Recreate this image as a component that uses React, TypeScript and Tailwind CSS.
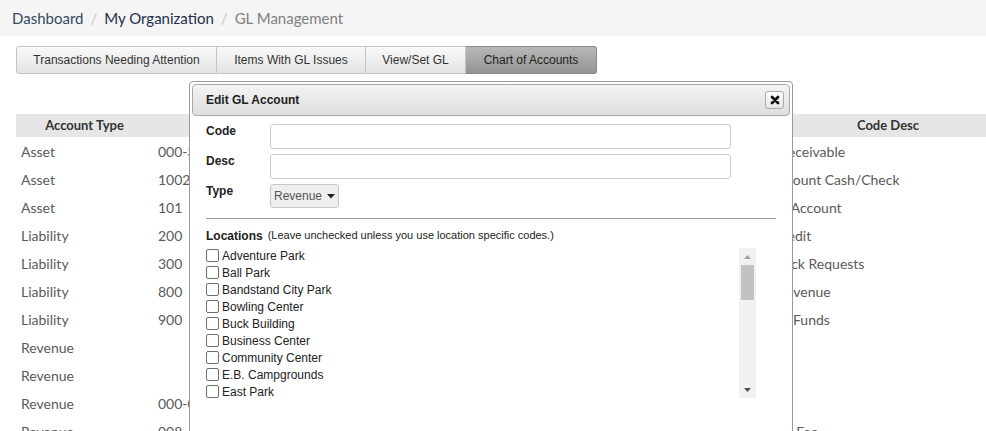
import React from "react";

const tabs = [
  { label: "Transactions Needing Attention", w: "w-[201px]", active: false },
  { label: "Items With GL Issues", w: "w-[149px]", active: false },
  { label: "View/Set GL", w: "w-[100px]", active: false },
  { label: "Chart of Accounts", w: "w-[131px]", active: true },
];

const rows = [
  { type: "Asset", code: "000-3", desc: "Accounts Receivable" },
  { type: "Asset", code: "1002", desc: "Deposit Account Cash/Check" },
  { type: "Asset", code: "101", desc: "Investment Account" },
  { type: "Liability", code: "200", desc: "Account Credit" },
  { type: "Liability", code: "300", desc: "Refund Check Requests" },
  { type: "Liability", code: "800", desc: "Deferred Revenue" },
  { type: "Liability", code: "900", desc: "Scholarship Funds" },
  { type: "Revenue", code: "", desc: "" },
  { type: "Revenue", code: "", desc: "" },
  { type: "Revenue", code: "000-0", desc: "" },
  { type: "Revenue", code: "008", desc: "Registration Fee" },
];

const locations = [
  "Adventure Park",
  "Ball Park",
  "Bandstand City Park",
  "Bowling Center",
  "Buck Building",
  "Business Center",
  "Community Center",
  "E.B. Campgrounds",
  "East Park",
  "Fairgrounds",
];

const EditModal: React.FC = () => {
  return (
    <div className="absolute left-[189px] top-[81px] w-[604px] h-[400px] border border-[#9a9a9a] rounded-[4px] bg-white p-[2px] font-['Liberation_Sans',Arial,sans-serif] text-[#222]">
      {/* title bar */}
      <div className="h-[32px] flex items-center justify-between pl-[13px] pr-[5px] border border-[#aaa] rounded-[4px] bg-gradient-to-b from-[#f4f4f4] to-[#dedede]">
        <span className="text-[12px] font-bold text-[#222]">Edit GL Account</span>
        <button className="w-[19px] h-[18px] flex items-center justify-center border border-[#aaa] rounded-[3px] bg-gradient-to-b from-[#ffffff] to-[#e4e4e4]">
          <svg width="10" height="10" viewBox="0 0 10 10">
            <path d="M2 2 L8 8 M8 2 L2 8" stroke="#111" strokeWidth="2.8" strokeLinecap="round" />
          </svg>
        </button>
      </div>

      <div className="pl-[14px] pt-[8px]">
        <div className="flex flex-col gap-[5px]">
          <div className="flex h-[25px]">
            <label className="w-[64px] text-[12px] font-bold leading-[15px]">Code</label>
            <div className="w-[461px] h-[25px] border border-[#ccc] rounded-[3px] bg-white" />
          </div>
          <div className="flex h-[25px]">
            <label className="w-[64px] text-[12px] font-bold leading-[15px]">Desc</label>
            <div className="w-[461px] h-[25px] border border-[#ccc] rounded-[3px] bg-white" />
          </div>
          <div className="flex h-[24px]">
            <label className="w-[64px] text-[12px] font-bold leading-[15px]">Type</label>
            <div className="w-[69px] h-[24px] flex items-center gap-[5px] pl-[3px] border border-[#c8c8c8] rounded-[3px] bg-[#eeeeee] text-[12px] text-[#555]">
              <span>Revenue</span>
              <svg width="8" height="5" viewBox="0 0 8 5">
                <path d="M0 0 H8 L4 4.5 Z" fill="#222" />
              </svg>
            </div>
          </div>
        </div>

        <div className="mt-[10px] w-[570px] border-t border-[#999]" />

        <div className="mt-[9px] h-[15px] flex items-center gap-[5px]">
          <span className="text-[12px] font-bold">Locations</span>
          <span className="text-[11px]">(Leave unchecked unless you use location specific codes.)</span>
        </div>

        <div className="mt-[5px] w-[550px] h-[150px] flex">
          <div className="flex-1 overflow-hidden">
            <div className="-mt-[1px]">
              {locations.map((loc) => (
                <div key={loc} className="h-[17px] flex items-center gap-[3px]">
                  <span className="w-[13px] h-[13px] border border-[#6f6f6f] rounded-[2px] bg-white shrink-0" />
                  <span className="text-[12px] text-[#222]">{loc}</span>
                </div>
              ))}
            </div>
          </div>
          <div className="w-[17px] h-full bg-[#f1f1f1] flex flex-col items-center">
            <div className="h-[17px] flex items-center justify-center">
              <svg width="7" height="4" viewBox="0 0 7 4">
                <path d="M0 4 L3.5 0 L7 4 Z" fill="#a3a3a3" />
              </svg>
            </div>
            <div className="w-[13px] h-[35px] bg-[#c1c1c1]" />
            <div className="flex-1" />
            <div className="h-[17px] flex items-center justify-center">
              <svg width="7" height="4" viewBox="0 0 7 4">
                <path d="M0 0 H7 L3.5 4 Z" fill="#505050" />
              </svg>
            </div>
          </div>
        </div>
      </div>
    </div>
  );
};

const App: React.FC = () => {
  return (
    <div className="relative w-[986px] h-[431px] overflow-hidden bg-white font-['Lato','Open_Sans',sans-serif]">
      {/* breadcrumb */}
      <div className="h-[36px] bg-[#f5f5f5] flex items-center pl-[12px] text-[15px]">
        <span className="text-[#34495e]">Dashboard</span>
        <span className="px-[7px] text-[#ccc]">/</span>
        <span className="text-[#1f2f4a]">My Organization</span>
        <span className="px-[7px] text-[#ccc]">/</span>
        <span className="text-[#808080]">GL Management</span>
      </div>

      <div className="pl-[16px] pt-[10px]">
        {/* tabs */}
        <div className="flex h-[28px] font-['Liberation_Sans',Arial,sans-serif] text-[12px]">
          {tabs.map((t, i) => (
            <div
              key={t.label}
              className={`${t.w} flex items-center justify-center border-y border-r ${
                i === 0 ? "border-l rounded-l-[3px]" : ""
              } ${i === tabs.length - 1 ? "rounded-r-[3px]" : ""} ${
                t.active
                  ? "bg-gradient-to-b from-[#b8b8b8] to-[#949494] border-[#8a8a8a] text-[#222]"
                  : "bg-gradient-to-b from-[#f9f9f9] to-[#e4e4e4] border-[#c4c4c4] text-[#333]"
              }`}
            >
              {t.label}
            </div>
          ))}
        </div>

        {/* table */}
        <div className="mt-[40px] w-[1043px]">
          <div className="grid grid-cols-[137px_564px_342px] h-[23px] bg-[#e6e6e6] items-center text-[13px] font-bold text-[#333]">
            <div className="text-center">Account Type</div>
            <div />
            <div className="text-center">Code Desc</div>
          </div>
          {rows.map((r, i) => (
            <div key={i} className="grid grid-cols-[137px_564px_342px] h-[28px] items-center text-[14px] text-[#5a5a5a]">
              <div className="pl-[5px]">{r.type}</div>
              <div className="pl-[5px]">{r.code}</div>
              <div className="pl-[2px]">{r.desc}</div>
            </div>
          ))}
        </div>
      </div>

      <EditModal />
    </div>
  );
};

export default App;
